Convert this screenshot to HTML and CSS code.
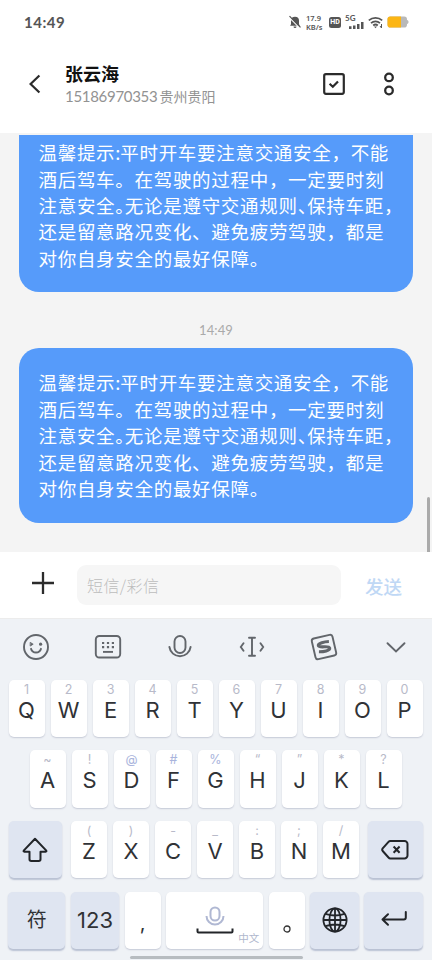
FILE: index.html
```html
<!DOCTYPE html>
<html lang="zh-CN">
<head>
<meta charset="utf-8">
<title>张云海</title>
<link rel="stylesheet" href="styles.css">
</head>
<body>
<div class="phone">
  <div class="status">
    <span class="clock">14:49</span>
    <div class="status-icons">
      <svg width="12" height="14" viewBox="0 0 12 14"><path d="M1.200 10.500 2 9.200V5.800a4 4 0 0 1 8 0v3.400l1 1.500H1.200zM4.500 11.400h3a1.500 1.500 0 0 1-3 0z" fill="#555"/><path d="M.3 2.500 11 13.300" stroke="#fff" stroke-width="1.200"/><path d="M.5 1.200 11.500 12.400" stroke="#555" stroke-width="1.200"/></svg>
      <span class="speed"><b>17.9</b><b>KB/s</b></span>
      <span class="hd">HD</span>
      <span class="cell"><b>5G</b><svg width="15" height="7" viewBox="0 0 15 7"><path d="M0 4.200h2.500V7H0zM4 3.400h2.500V7H4zM8 2h2.500v5H8zM12 0h2.500v7H12z" fill="#555"/></svg></span>
      <svg class="wifi" width="16" height="13" viewBox="0 0 16 13" fill="none" stroke="#555" stroke-width="1.700"><path d="M.8 4.400a10.200 10.200 0 0 1 13.400 0M3 7.100a6.600 6.600 0 0 1 9 0M5.200 9.500a3.500 3.500 0 0 1 4.600 0"/><path d="m6 10.500 1.500 1.700L9 10.500z" fill="#555" stroke="none"/><path d="M13.500 8v4M12 10l1.500 2" stroke-width="1"/></svg>
      <svg width="22" height="12" viewBox="0 0 22 12"><rect x=".5" y=".5" width="19.500" height="11" rx="2.800" fill="#b9b9b9"/><path d="M3.300.5H14v11H3.300A2.800 2.800 0 0 1 .5 8.700V3.300A2.800 2.800 0 0 1 3.300.5z" fill="#fcb614"/><path d="M20 4c2 .3 2 3.700 0 4z" fill="#b9b9b9"/></svg>
    </div>
  </div>
  <header class="header">
    <svg class="back" width="14" height="20" viewBox="0 0 14 20"><path d="M11.400 1.500 2.600 10l8.800 8.500" fill="none" stroke="#2b2b2b" stroke-width="2.200"/></svg>
    <div class="contact">
      <h1>张云海</h1>
      <p><span class="num">15186970353</span>贵州贵阳</p>
    </div>
    <svg class="check" width="22" height="22" viewBox="0 0 22 22" fill="none" stroke="#2b2b2b" stroke-width="2.200"><rect x="1.200" y="1.200" width="19.600" height="19.600" rx="1.700"/><path d="m6.600 10.700 3.200 3 5.200-5.300"/></svg>
    <svg class="more" width="12" height="24" viewBox="0 0 12 24" fill="none" stroke="#2b2b2b" stroke-width="2.300"><circle cx="6" cy="5.400" r="3.800"/><circle cx="6" cy="18.500" r="3.800"/></svg>
  </header>
  <main class="chat">
    <div class="bubble cut">
      <p>温馨提示<span class="colon">:</span>平时开车要注意交通安全，不能</p>
      <p>酒后驾车。在驾驶的过程中，一定要时刻</p>
      <p>注意安全<span class="half">。</span>无论是遵守交通规则<span class="half">、</span>保持车距<span class="half">，</span></p>
      <p>还是留意路况变化、避免疲劳驾驶，都是</p>
      <p>对你自身安全的最好保障。</p>
    </div>
    <time class="stamp">14:49</time>
    <div class="bubble">
      <p>温馨提示<span class="colon">:</span>平时开车要注意交通安全，不能</p>
      <p>酒后驾车。在驾驶的过程中，一定要时刻</p>
      <p>注意安全<span class="half">。</span>无论是遵守交通规则<span class="half">、</span>保持车距<span class="half">，</span></p>
      <p>还是留意路况变化、避免疲劳驾驶，都是</p>
      <p>对你自身安全的最好保障。</p>
    </div>
    <i class="scroll"></i>
  </main>
  <div class="composer">
    <svg width="22" height="22" viewBox="0 0 22 22"><path d="M11 0v22M0 11h22" stroke="#2b2b2b" stroke-width="2.300"/></svg>
    <div class="field">短信/彩信</div>
    <span class="send">发送</span>
  </div>
  <section class="keyboard">
    <div class="tools">
      <svg width="28" height="28" viewBox="0 0 28 28" fill="none" stroke="#62666b" stroke-width="1.900" stroke-linecap="round"><circle cx="14" cy="14" r="12"/><path d="M9 15.800a5.200 5.200 0 0 0 10 0"/><path d="m8.500 9.500 2.700 1.700-2.700 1.700z" fill="#62666b" stroke-width=".8"/><circle cx="18.600" cy="11.200" r="1.600" fill="#62666b" stroke="none"/></svg>
      <svg width="28" height="28" viewBox="0 0 28 28" fill="none" stroke="#62666b" stroke-width="1.900"><rect x="1.800" y="3" width="24.400" height="21.500" rx="3.500"/><path d="M8 10h2.200m2.700 0h2.200m2.700 0H20M8 14.200h2.200m2.700 0h2.200m2.700 0H20" stroke-width="2.200"/><path d="M9 18.900h10"/></svg>
      <svg width="28" height="28" viewBox="0 0 28 28" fill="none" stroke="#62666b" stroke-width="1.900" stroke-linecap="round"><rect x="8.500" y="3" width="11" height="17" rx="5.500"/><path d="M3.400 14a10.700 10.700 0 0 0 21.200 0"/></svg>
      <svg width="28" height="28" viewBox="0 0 28 28" fill="none" stroke="#62666b" stroke-width="1.900" stroke-linecap="round"><path d="M14 4.800v18M11 4.800h6M11 22.800h6M5.500 10.200 2.800 14l2.700 3.800M22.500 10.200l2.700 3.800-2.700 3.800"/></svg>
      <svg width="28" height="28" viewBox="0 0 28 28" fill="none" stroke="#62666b" stroke-width="1.900"><g transform="rotate(-13 14 14)"><rect x="3.400" y="3.400" width="21.200" height="21.200" rx="2.500"/><path d="M20 9.800c-4.300-.8-11.200-.9-11.200 1.600 0 2.900 10.500 1.900 10.500 4.900 0 2.600-7 2.300-11.300 1.200" stroke-width="3.100"/></g></svg>
      <svg width="28" height="28" viewBox="0 0 28 28" fill="none" stroke="#62666b" stroke-width="1.900" stroke-linecap="round"><path d="m5.500 10.200 8.500 8.200 8.500-8.200"/></svg>
    </div>
    <div class="row">
      <div class="key"><small>1</small>Q</div><div class="key"><small>2</small>W</div><div class="key"><small>3</small>E</div><div class="key"><small>4</small>R</div><div class="key"><small>5</small>T</div><div class="key"><small>6</small>Y</div><div class="key"><small>7</small>U</div><div class="key"><small>8</small>I</div><div class="key"><small>9</small>O</div><div class="key"><small>0</small>P</div>
    </div>
    <div class="row">
      <div class="key"><small>~</small>A</div><div class="key"><small>!</small>S</div><div class="key"><small class="blue">@</small>D</div><div class="key"><small class="blue">#</small>F</div><div class="key"><small class="blue">%</small>G</div><div class="key"><small>“</small>H</div><div class="key"><small>”</small>J</div><div class="key"><small>*</small>K</div><div class="key"><small>?</small>L</div>
    </div>
    <div class="row third">
      <div class="key fn shift"><svg width="28" height="28" viewBox="0 0 28 28" fill="none" stroke="#222529" stroke-width="2" stroke-linejoin="round"><path d="M14 2.800 25.300 14.600q.5 1-.6 1.100h-5.200v7.600q0 1.700-1.700 1.700h-7.600q-1.700 0-1.700-1.700v-7.600H3.300q-1.100-.1-.6-1.100z"/></svg></div>
      <div class="key"><small>(</small>Z</div><div class="key"><small>)</small>X</div><div class="key"><small>-</small>C</div><div class="key"><small>_</small>V</div><div class="key"><small>:</small>B</div><div class="key"><small>;</small>N</div><div class="key"><small>/</small>M</div>
      <div class="key fn del"><svg width="28" height="20" viewBox="0 0 28 20" fill="none" stroke="#222529" stroke-width="2" stroke-linejoin="round"><path d="M9.300 1h14.200a3 3 0 0 1 3 3v11.400a3 3 0 0 1-3 3H9.300q-1 0-1.800-.9L1.700 11q-1-1.300 0-2.600l5.800-6.500Q8.300 1 9.300 1zM12.600 6.500l6 6.300m0-6.300-6 6.300"/></svg></div>
    </div>
    <div class="row">
      <div class="key fn sym">符</div>
      <div class="key fn digits">123</div>
      <div class="key comma">,</div>
      <div class="key space"><svg width="38" height="30" viewBox="0 0 38 30" fill="none" stroke-width="2"><rect x="14.500" y="1.500" width="9" height="13" rx="4.500" stroke="#b0b8d3"/><path d="M10.500 10a8.500 8.500 0 0 0 17 0" stroke="#b0b8d3"/><path d="M1.500 22.500v3q0 1 1 1h33q1 0 1-1v-3" stroke="#222529"/></svg><span>中文</span></div>
      <div class="key stop"><svg width="8" height="8" viewBox="0 0 8 8"><circle cx="4" cy="4" r="3" fill="none" stroke="#333" stroke-width="1.300"/></svg></div>
      <div class="key fn globe"><svg width="26" height="26" viewBox="0 0 26 26" fill="none" stroke="#222529" stroke-width="1.800"><circle cx="13" cy="13" r="11.600"/><ellipse cx="13" cy="13" rx="5.600" ry="11.600"/><path d="M13 1.400v23.200M1.400 13h23.200M3.500 6.800q9.500 3.400 19 0M3.500 19.200q9.500-3.400 19 0"/></svg></div>
      <div class="key fn enter"><svg width="28" height="18" viewBox="0 0 28 18" fill="none" stroke="#222529" stroke-width="2" stroke-linecap="round" stroke-linejoin="round"><path d="M25.800 1v5.500q0 2-2 2H2.500M8 3.300 2.500 8.500 8 13.700"/></svg></div>
    </div>
    <div class="home"></div>
  </section>
</div>
</body>
</html>
```
FILE: styles.css
```css
* { box-sizing: border-box; }
body { margin: 0; background: #fff; font-family: Lato, "Noto Sans CJK SC", sans-serif; }
h1, p { margin: 0; }
svg { display: block; flex: none; }
.phone { width: 432px; height: 960px; overflow: hidden; display: flex; flex-direction: column; }

.status { height: 44px; flex: none; display: flex; align-items: center; justify-content: space-between; padding: 0 23px 0 24px; color: #555; }
.clock { font-size: 15px; line-height: 18px; font-weight: 700; letter-spacing: .5px; margin-bottom: 1px; }
.status-icons { display: flex; align-items: center; }
.speed { display: flex; flex-direction: column; gap: 1px; width: 18px; margin-left: 5px; font-size: 8px; line-height: 8px; white-space: nowrap; }
.speed b { height: 8px; font-family: "Noto Sans", sans-serif; font-weight: 600; font-size: 7.500px; overflow: hidden; }
.hd { width: 12px; height: 11px; margin-left: 5px; border-radius: 2.500px; background: #555; color: #fff; font: 700 7px/11px Roboto, sans-serif; text-align: center; }
.cell { width: 19px; height: 14px; margin-left: 4px; display: flex; flex-direction: column; font-size: 8px; line-height: 7px; }
.cell svg { margin-left: 4px; }
.wifi { margin: 1px 3px 0 4px; }

.header { height: 89px; flex: none; display: flex; align-items: flex-start; padding-left: 28px; }
.back { margin-top: 30px; }
.contact { width: 258px; margin: 17.500px 0 0 23px; }
.contact h1 { font-size: 18px; line-height: 24px; font-weight: 700; color: #111; }
.contact p { font-size: 14px; line-height: 20px; color: #929292; white-space: nowrap; }
.num { font-size: 15px; letter-spacing: -.3px; margin-right: 2px; }
.check { margin-top: 29px; }
.more { margin: 28px 0 0 38px; }

.chat { position: relative; height: 419px; flex: none; padding: 1.500px 19px 0; background: #f4f4f4; overflow: hidden; }
.bubble { height: 174.500px; padding: 21.400px 0 0 19.500px; border-radius: 20px; background: #569bfa; color: #fff; font-size: 18.500px; line-height: 26.400px; letter-spacing: .7px; white-space: nowrap; font-family: "Noto Sans CJK SC", sans-serif; font-weight: 400; }
.cut { height: 157.500px; padding-top: 4.700px; border-radius: 0 0 20px 20px; }
.colon { letter-spacing: -.2px; }
.half { letter-spacing: -9px; }
.stamp { display: block; height: 56px; padding-top: 28px; text-align: center; font-size: 13px; line-height: 20px; letter-spacing: .1px; color: #aaa; }
.scroll { position: absolute; right: 2px; bottom: 0; width: 3px; height: 55px; border-radius: 2px 2px 0 0; background: #aaa; }

.composer { height: 66px; flex: none; display: flex; align-items: flex-start; padding: 13px 0 0 32px; background: #fff; }
.composer > svg { margin-top: 7px; }
.field { width: 264px; height: 40px; margin-left: 23px; padding-left: 10px; border-radius: 9px; background: #f6f6f6; color: #bdbdbd; font: 300 16px/41px "Noto Sans CJK SC", sans-serif; letter-spacing: .4px; }
.send { margin-left: 24px; font: 500 18.500px/43px "Noto Sans CJK SC", sans-serif; color: #c0d8f5; }

.keyboard { height: 342px; flex: none; display: flex; flex-direction: column; padding-top: 1px; border-top: 1px solid #ececec; background: #eff2f6; }
.tools { height: 59.500px; flex: none; display: flex; justify-content: space-between; padding: 13px 22px 0; }
.row { height: 57.500px; flex: none; display: flex; justify-content: center; gap: 6px; margin: 0 1px 13.200px 0; }
.key { position: relative; width: 36px; height: 57.500px; display: flex; flex-direction: column; align-items: center; border-radius: 5px; background: #fff; box-shadow: 0 1px 1.500px #c5cad6; color: #303236; font: 400 22px/26px Inter, "Noto Sans CJK SC", sans-serif; }
.key small { height: 17px; font-size: 12.500px; line-height: 20px; color: #b8bac9; }
.key .blue { color: #a9b4dc; }
.fn { background: #dfe5f1; justify-content: center; box-shadow: 0 1.500px 1.500px #b9c1d3; }
.shift { width: 53.500px; margin-right: 3px; }
.del { width: 54.500px; margin-left: 3px; }
.sym { width: 57px; font-size: 20px; }
.digits { width: 48.500px; }
.comma { padding-top: 18px; font-size: 20px; }
.space { width: 97px; padding-top: 14.500px; }
.space span { position: absolute; right: 4px; bottom: 2px; font-size: 10.500px; line-height: 16px; color: #b0b7cd; }
.stop { padding-top: 33px; }
.globe { width: 48.500px; }
.enter { width: 58.500px; }
.row:nth-of-type(5) { gap: 5.500px; }
.home { width: 173px; height: 3px; flex: none; align-self: center; margin-top: -6px; border-radius: 2px; background: #b7bcc0; }
```
